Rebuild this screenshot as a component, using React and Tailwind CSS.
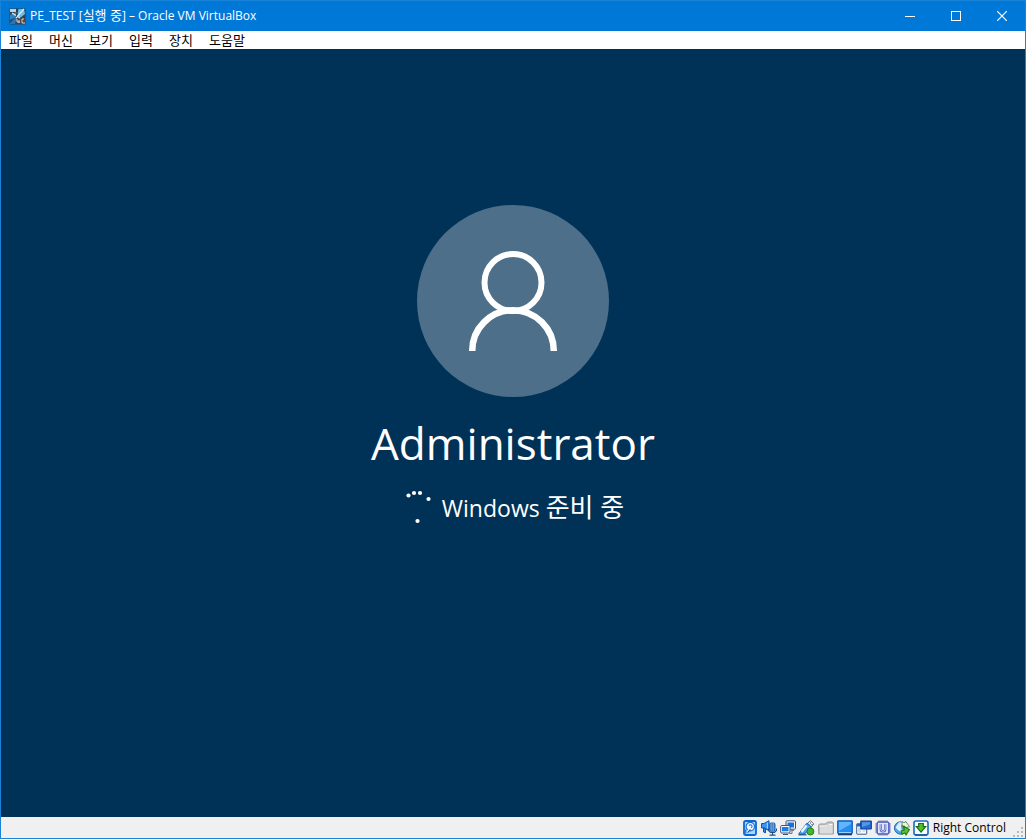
import React from 'react';

const menus = ['파일', '머신', '보기', '입력', '장치', '도움말'];

function VmIcon() {
    return (
        <svg width="17" height="17" viewBox="0 0 17 17" aria-hidden="true">
            <rect x="0.5" y="0.5" width="16" height="16" rx="1" fill="#2f4254" />
            <path d="M1 7l6-3h3L7 9l-6 3z" fill="#2a83c4" />
            <path d="M9 1h6l1 5-5 4-2-2z" fill="#68c0ea" />
            <path d="M1 1h6v3H1z" fill="#c9ced3" />
            <path d="M1 15l6-6 1 2-2 5H1z" fill="#2378bd" />
            <path d="M9 9l7 1v6H8z" fill="#4a4348" />
            <path d="M15 1L7 10M3 5l8 5" stroke="#dcebf5" strokeWidth="1.3" fill="none" />
            <path d="M9 1L7 9" stroke="#22384c" strokeWidth="1" fill="none" />
            <path d="M8 11v3h3M10 12v3M15 11h-2v4h3" stroke="#d5d2d0" strokeWidth="1" fill="none" />
        </svg>
    );
}

function HardDiskIcon() {
    return (
        <svg width="16" height="16" viewBox="0 0 16 16">
            <rect x="2" y="1" width="12" height="14" rx="1.5" fill="#a9d5ff" stroke="#0a68d4" strokeWidth="1.8" />
            <circle cx="8.3" cy="6.6" r="4.2" fill="#f2f9ff" stroke="#1a70d6" strokeWidth="1.2" />
            <path d="M7 5.8a1.6 1.6 0 1 1 1.6 2.2" stroke="#2b7edb" strokeWidth="1.1" fill="none" />
            <path d="M9 8l-4.5 4.5" stroke="#fff" strokeWidth="1.6" />
            <path d="M8.5 9.5L5.5 12.7M3.8 9.5v4" stroke="#0a61c9" strokeWidth="1.2" fill="none" />
        </svg>
    );
}

function AudioIcon() {
    return (
        <svg width="16" height="16" viewBox="0 0 16 16">
            <path d="M.5 3.5H3L8 .7v10L3 8H.5z" fill="#3d96f0" stroke="#0b58b4" />
            <path d="M2.5 8v4l2 .8V8.5z" fill="#3c8add" stroke="#0b55a8" />
            <path d="M6.5 2.5v6" stroke="#9ed1ff" />
            <rect x="8.7" y="3" width="5.2" height="8.2" rx="1.6" fill="#c5e2fb" stroke="#1a5fae" strokeWidth="1.2" />
            <path d="M9 5h5M9 7h5M9 9h5" stroke="#1e5fae" strokeWidth="1.1" />
            <path d="M11.3 3v8" stroke="#3c7dc8" />
            <path d="M7.5 8.5v2l2 2h4l2-2v-2M11.5 12.5v3M8.5 15.2h6" stroke="#24508a" strokeWidth="1.2" fill="none" />
        </svg>
    );
}

function NetworkIcon() {
    return (
        <svg width="16" height="16" viewBox="0 0 16 16">
            <rect x="6" y="0.8" width="9.5" height="8.4" rx="1" fill="#f8fbff" stroke="#3b5377" />
            <rect x="7.5" y="2.5" width="6.5" height="5" fill="#1473dd" />
            <path d="M11.5 9v1.5H14M9.5 13.5H12v-4" stroke="#6b7b92" fill="none" />
            <rect x="0.7" y="5.5" width="9.3" height="7.5" rx="1" fill="#f8fbff" stroke="#3b5377" />
            <rect x="2" y="7" width="6.5" height="4.3" fill="#1d7de7" />
            <path d="M3 14.5h5" stroke="#3b5377" />
        </svg>
    );
}

function UsbIcon() {
    return (
        <svg width="17" height="16" viewBox="0 0 17 16" className="shrink-0">
            <path d="M9.3 3.5L12.5.7l3.3 3.2-2.6 3.2z" fill="#f3f5f7" stroke="#65717f" />
            <path d="M12 3h1M13.5 4.5h1" stroke="#404b58" />
            <path d="M8.5 3.5c2 0 4.6 2.4 4.6 4.5L7 13.5 1.5 14.7.8 13.8z" fill="#4ba5f4" stroke="#125fb4" />
            <path d="M8.5 5.5L3.5 12" stroke="#eaf6ff" strokeWidth="2.4" />
            <path d="M.5 14.8h8" stroke="#164f91" strokeWidth="1.2" />
            <circle cx="12.4" cy="11.5" r="3.5" fill="#43b72c" stroke="#287d1d" />
        </svg>
    );
}

function FolderIcon() {
    return (
        <svg width="16" height="16" viewBox="0 0 16 16">
            <path d="M.7 14V5l1-1h5.8l2-2h5l.9 1v11z" fill="#c8c8c8" stroke="#989898" />
            <path d="M2 6.5h8L11.5 5h3v8.5H2z" fill="#dcdcdc" />
            <path d="M1.5 6h8L11 4.5h3.5" stroke="#f8f8f8" fill="none" />
        </svg>
    );
}

function DisplayIcon() {
    return (
        <svg width="16" height="16" viewBox="0 0 16 16">
            <rect x="0.7" y="0.8" width="14.6" height="12.7" rx="0.7" fill="#248df0" stroke="#0f60c4" strokeWidth="1.2" />
            <path d="M2 2h12v2L2 11z" fill="#62b5fa" />
            <path d="M2 12.5h12" stroke="#9bd1ff" />
            <path d="M1 14.6h14" stroke="#173f78" strokeWidth="1.4" />
        </svg>
    );
}

function RecordingIcon() {
    return (
        <svg width="16" height="16" viewBox="0 0 16 16">
            <rect x="0.7" y="3.7" width="10" height="10.5" rx="0.5" fill="#f7faff" stroke="#395f91" />
            <path d="M1 4h5v2.5H1z" fill="#1d65c2" />
            <rect x="2" y="7.5" width="3" height="5" fill="#ccd7e4" />
            <path d="M6.5 11h3" stroke="#b7c5d6" />
            <rect x="4.8" y="1" width="10.5" height="8" rx="0.5" fill="#246ed2" stroke="#103f91" strokeWidth="1.2" />
            <path d="M6 2.3h8v2L6 7z" fill="#5698e8" />
        </svg>
    );
}

function CpuIcon() {
    return (
        <svg width="16" height="16" viewBox="0 0 16 16">
            <path d="M3.5 1.2h10M3.5 14.8h10M1.2 3.5v10M14.8 3.5v10" stroke="#3b4699" strokeWidth="1.6" strokeDasharray="1 1" />
            <rect x="2.2" y="2.2" width="11.6" height="11.6" rx="1" fill="#dce4ff" stroke="#4656ba" strokeWidth="1.3" />
            <path d="M5.8 4.2v5q0 2.2 2.2 2.2t2.2-2.2v-5" stroke="#4a58b4" strokeWidth="2.2" fill="none" />
            <path d="M5.8 4.2v5q0 2.2 2.2 2.2t2.2-2.2v-5" stroke="#f4f6ff" strokeWidth="0.8" fill="none" />
        </svg>
    );
}

function MouseIcon() {
    return (
        <svg width="16" height="16" viewBox="0 0 16 16">
            <circle cx="6.6" cy="8" r="6.2" fill="#4aa5ef" stroke="#266aaa" />
            <path d="M1.5 7.5L5 2.3l4 .2L7 6l1 7-4-3z" fill="#d8efff" />
            <path d="M8 2l3 .6.6-1.4 4 5.6-5 1L11 6 8 7z" fill="#e7fbdc" stroke="#63836a" strokeWidth="0.9" />
            <path d="M7 11l3.5-1-1.5-4 6.5 3.5L12 15l-1-2-3 1.3z" fill="#55c333" stroke="#247a1b" strokeWidth="1.1" />
        </svg>
    );
}

function KeyboardIcon() {
    return (
        <svg width="16" height="16" viewBox="0 0 16 16">
            <rect x="1" y="1" width="14" height="14" rx="2" fill="#f7fcff" stroke="#146bc8" strokeWidth="1.6" />
            <path d="M2 15h12" stroke="#0c4b96" strokeWidth="1.3" />
            <path d="M5.7 3.5h4.6v3.2h2.4L8 12.2 3.3 6.7h2.4z" fill="#4fc32c" stroke="#206b17" strokeWidth="1.2" />
        </svg>
    );
}

const indicators = [
    { label: 'Hard disks', Icon: HardDiskIcon },
    { label: 'Audio', Icon: AudioIcon },
    { label: 'Network', Icon: NetworkIcon },
    { label: 'USB', Icon: UsbIcon },
    { label: 'Shared folders', Icon: FolderIcon },
    { label: 'Display', Icon: DisplayIcon },
    { label: 'Recording', Icon: RecordingIcon },
    { label: 'Processor', Icon: CpuIcon },
    { label: 'Mouse integration', Icon: MouseIcon },
    { label: 'Keyboard', Icon: KeyboardIcon },
];

function TitleBar() {
    return (
        <header className="flex h-[31px] shrink-0 items-center border-t border-[#1883d7] bg-[#0078d7] pl-2 text-white">
            <VmIcon />
            <h1 className="ml-1 grow truncate pb-[2px] text-[12px] leading-4">
                PE_TEST [<span className="text-[13px]">실행 중</span>] – Oracle VM VirtualBox
            </h1>
            <button type="button" aria-label="Minimize" className="flex h-full w-[46px] items-center justify-center">
                <svg width="10" height="11" viewBox="0 0 10 11"><path d="M0 5.5h10" stroke="#fff" /></svg>
            </button>
            <button type="button" aria-label="Maximize" className="flex h-full w-[46px] items-center justify-center">
                <svg width="10" height="10" viewBox="0 0 10 10"><rect x="0.5" y="0.5" width="9" height="9" fill="none" stroke="#fff" /></svg>
            </button>
            <button type="button" aria-label="Close" className="flex h-full w-[46px] items-center justify-center">
                <svg width="10" height="10" viewBox="0 0 10 10"><path d="M0 0l10 10M10 0L0 10" stroke="#fff" strokeWidth="1.2" /></svg>
            </button>
        </header>
    );
}

function MenuBar() {
    return (
        <nav className="flex h-[18px] shrink-0 items-center gap-4 bg-white pl-2 font-['Noto_Sans_CJK_KR',sans-serif] text-[13px] leading-4 text-black">
            {menus.map((menu) => (
                <button key={menu} type="button" className="min-w-6 whitespace-nowrap pb-px">{menu}</button>
            ))}
        </nav>
    );
}

function Spinner() {
    return (
        <svg width="32" height="36" viewBox="0 0 32 36" fill="#fff" aria-hidden="true">
            <circle cx="6.5" cy="6.5" r="2.1" />
            <circle cx="12" cy="4" r="2.1" />
            <circle cx="18" cy="4" r="2.1" />
            <circle cx="26.5" cy="10" r="2.1" />
            <circle cx="15.5" cy="32" r="2.1" />
        </svg>
    );
}

function LoginScreen() {
    return (
        <main className="flex grow flex-col items-center bg-[#003257] pt-[156px] text-white">
            <svg width="192" height="192" viewBox="0 0 192 192" fill="none" aria-hidden="true">
                <circle cx="96" cy="96" r="96" fill="#4d6f89" />
                <circle cx="96" cy="77.5" r="28.5" stroke="#fff" strokeWidth="6" />
                <path d="M55.2 146a40.8 40.8 0 0 1 81.6 0" stroke="#fff" strokeWidth="6.5" />
            </svg>
            <h2 className="mt-4 text-[44px] leading-[60px]">Administrator</h2>
            <div className="mt-4 flex items-center gap-2">
                <Spinner />
                <p className="whitespace-pre text-[23px] leading-8">Windows <span className="text-[26px] leading-8">준비 중</span></p>
            </div>
        </main>
    );
}

function StatusBar() {
    return (
        <footer className="flex h-[21px] shrink-0 items-center justify-end bg-[#f0f0f0] text-black">
            <div className="flex gap-[3px]">
                {indicators.map(({ label, Icon }) => (
                    <button key={label} type="button" aria-label={label} className="flex w-4 justify-center">
                        <Icon />
                    </button>
                ))}
            </div>
            <span className="ml-1 text-[12px] leading-4">Right Control</span>
            <svg className="ml-[7px] self-end" width="12" height="12" viewBox="0 0 12 12" fill="#b8b8b8" aria-hidden="true">
                <path d="M8 1h2v2H8zM8 5h2v2H8zM4 5h2v2H4zM8 9h2v2H8zM4 9h2v2H4zM0 9h2v2H0z" />
            </svg>
        </footer>
    );
}

export default function App() {
    return (
        <div className="flex min-h-screen flex-col border-x border-b border-[#1883d7] bg-[#003257] font-['Open_Sans','Noto_Sans_CJK_KR',sans-serif]">
            <TitleBar />
            <MenuBar />
            <LoginScreen />
            <StatusBar />
        </div>
    );
}
